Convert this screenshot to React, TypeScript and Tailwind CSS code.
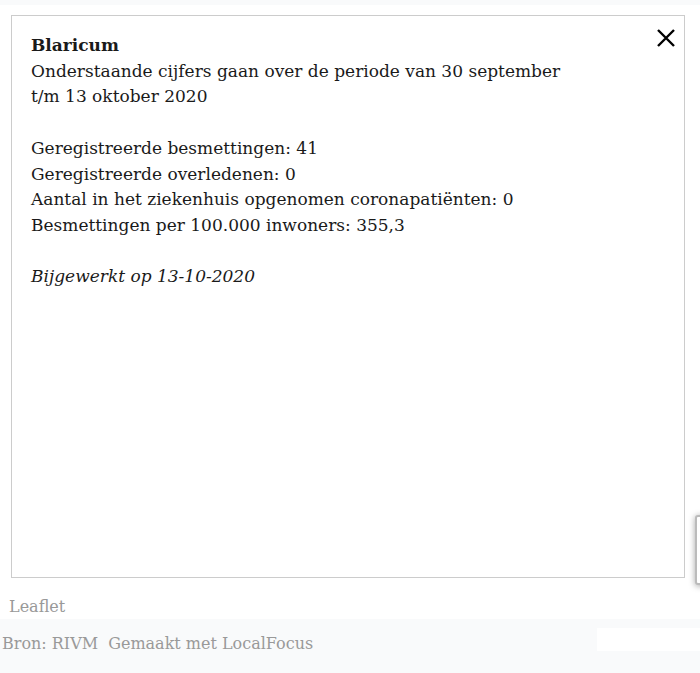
const serif = { fontFamily: '"DejaVu Serif", "Liberation Serif", serif' };

export default function App() {
  return (
    <div className="w-[700px] h-[673px] bg-white relative overflow-hidden" style={serif}>
      <div className="h-[5px] bg-[#f9fafb]" />
      <div className="pt-[10px] pl-[11px]">
        <div className="relative w-[674px] h-[563px] border border-[#cccccc] bg-white pl-[19px] pt-[17px] text-[17px] leading-[25.7px] text-[#1a1a1a]">
          <button className="absolute right-[6px] top-[10px] w-[24px] h-[24px] flex items-center justify-center">
            <svg width="20" height="20" viewBox="0 0 20 20" fill="none" stroke="#000" strokeWidth="2.4" strokeLinecap="butt">
              <path d="M2 2 L18 18 M18 2 L2 18" />
            </svg>
          </button>
          <div className="font-bold">Blaricum</div>
          <div className="w-[548px]">Onderstaande cijfers gaan over de periode van 30 september t/m 13 oktober 2020</div>
          <div className="h-[25.7px]" />
          <div>Geregistreerde besmettingen: 41</div>
          <div>Geregistreerde overledenen: 0</div>
          <div>Aantal in het ziekenhuis opgenomen coronapatiënten: 0</div>
          <div>Besmettingen per 100.000 inwoners: 355,3</div>
          <div className="h-[25.7px]" />
          <div className="italic">Bijgewerkt op 13-10-2020</div>
        </div>
      </div>
      <div className="absolute right-[-12px] top-[515px] w-[17px] h-[70px] border-2 border-[#bbbbbb] rounded-[3px] bg-white shadow-[0_1px_6px_rgba(0,0,0,0.35)]" />
      <div className="h-[41px] flex items-center pl-[9px] pt-[16px] text-[16px] text-[#999999]">Leaflet</div>
      <div className="h-[54px] bg-[#f9fafb] relative flex items-start pt-[13px] pl-[2px] text-[16px] text-[#999999]">
        <span>Bron: RIVM</span>
        <span className="ml-[10px]">Gemaakt met LocalFocus</span>
        <div className="absolute left-[597px] top-[9px] w-[103px] h-[23px] bg-white" />
      </div>
    </div>
  );
}
